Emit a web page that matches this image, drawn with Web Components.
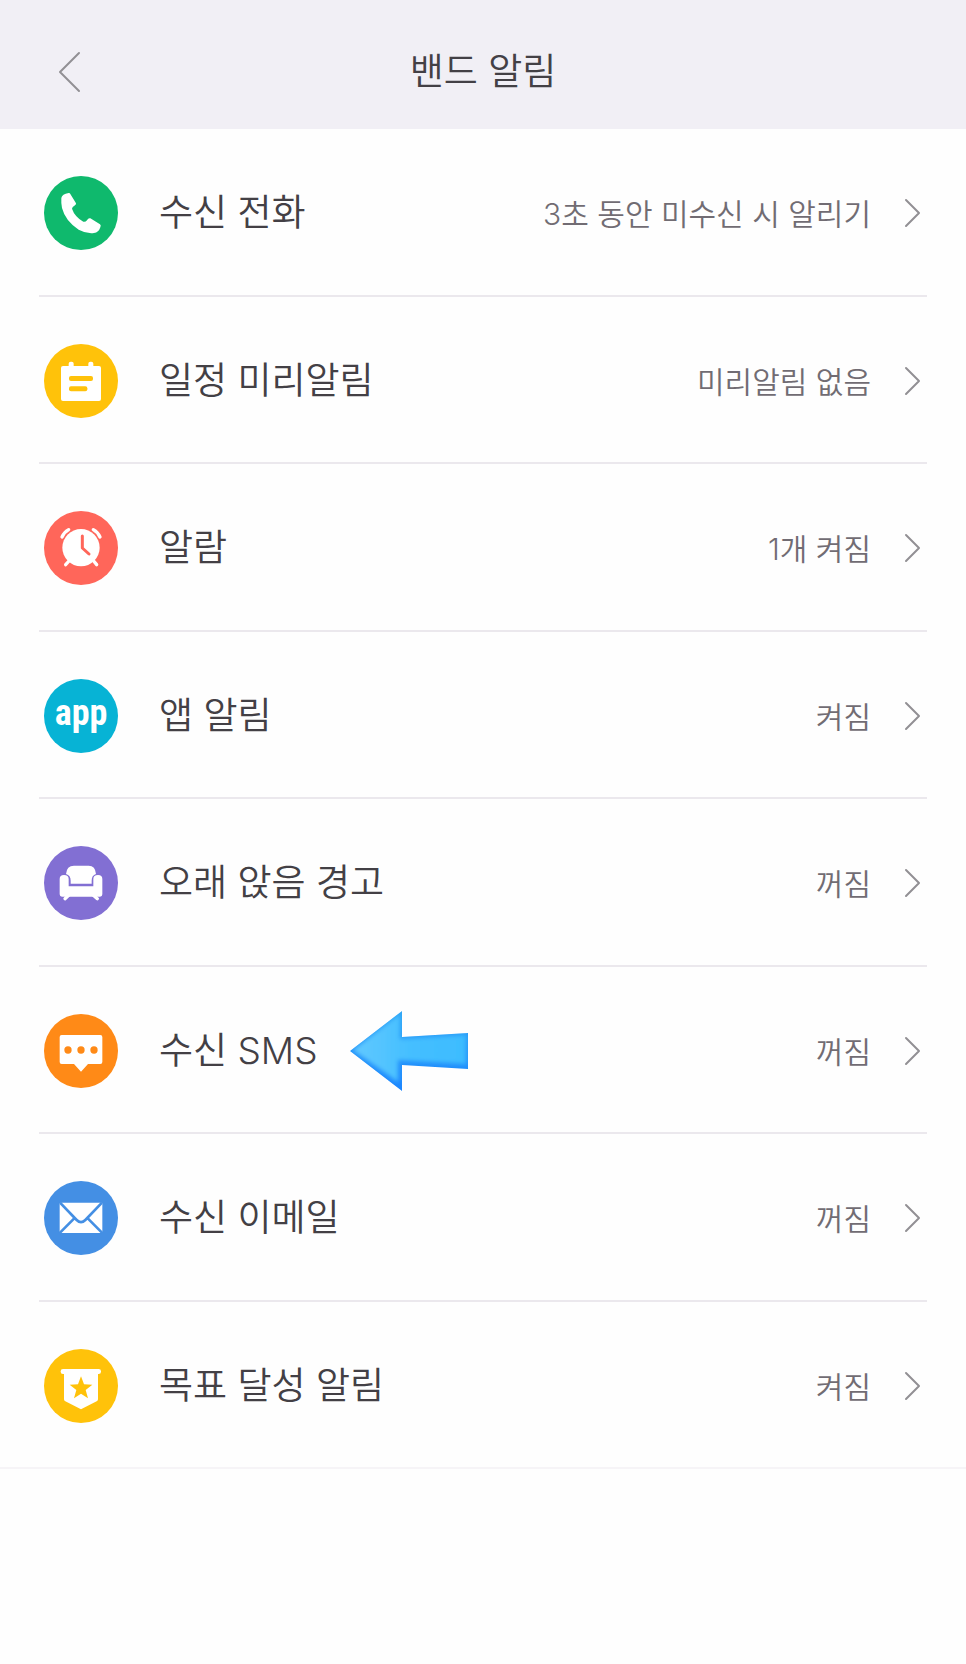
<!DOCTYPE html>
<html lang="ko">
<head>
<meta charset="UTF-8">
<meta name="viewport" content="width=device-width, initial-scale=1">
<title>밴드 알림</title>
<style>
    :root {
        --text-color: #434045;
        --value-color: #716c73;
        --arrow-color: #929094;
        --bar-bg: #f1eff5;
        --border-color: #ebe8ed;
    }
    body {
        margin: 0;
        background: #fefefe;
        color: var(--text-color);
        font-family: Inter, "Noto Sans CJK KR", sans-serif;
        font-weight: 350;
    }
</style>
</head>
<body>
<band-page>
    <band-header slot="header">밴드 알림</band-header>
    <band-item icon="phone" color="#0fb96d" value="3초 동안 미수신 시 알리기">수신 전화</band-item>
    <band-item icon="calendar" color="#ffc20a" value="미리알림 없음">일정 미리알림</band-item>
    <band-item icon="alarm" color="#ff665a" value="1개 켜짐">알람</band-item>
    <band-item icon="app" color="#07b3d5" value="켜짐">앱 알림</band-item>
    <band-item icon="sofa" color="#826fd3" value="꺼짐">오래 앉음 경고</band-item>
    <band-item icon="sms" color="#ff8a17" value="꺼짐">수신 SMS<pointer-arrow slot="mark"></pointer-arrow></band-item>
    <band-item icon="mail" color="#448fe4" value="꺼짐">수신 이메일</band-item>
    <band-item icon="goal" color="#ffc20a" value="켜짐">목표 달성 알림</band-item>
</band-page>

<script>
// Glyphs are drawn on a 222 x 222 disc; "currentColor" is the disc colour.
const ICONS = {
    phone: `<path d="M52 66Q54 54 74 51Q77 50 79 54L96 82Q97 85 93 88Q84 93 84 98Q92 122 118 137Q124 139 129 133Q133 125 139 127L168 145Q172 148 169 154Q164 170 150 171Q128 174 104 161Q64 135 54 96Q51 80 52 66Z"/>`,
    calendar: `
        <rect x="51" y="66" width="120" height="105" rx="6"/>
        <rect x="74" y="53" width="15" height="24" rx="6"/>
        <rect x="133" y="53" width="15" height="24" rx="6"/>
        <g fill="currentColor">
            <rect x="75" y="96" width="72" height="15" rx="6"/>
            <rect x="75" y="127" width="55" height="15" rx="6"/>
        </g>`,
    alarm: `
        <circle cx="111" cy="110" r="56"/>
        <g fill="none" stroke="#fff" stroke-width="10" stroke-linecap="round">
            <path d="M54 78Q60 64 74 56M148 56Q162 64 168 78"/>
            <path d="M75 150L65 161M149 150L158 161"/>
        </g>
        <path d="M115 75V111L135 129" fill="none" stroke="currentColor" stroke-width="9" stroke-linecap="round" stroke-linejoin="round"/>`,
    app: `<text x="111" y="139" text-anchor="middle">app</text>`,
    sofa: `
        <path d="M66 84Q68 59 90 59H134Q154 59 156 84Q143 88 143 104V113H80V104Q80 88 66 84Z"/>
        <path d="M47 99Q47 87 60 87Q74 87 74 99V121H148V99Q148 87 162 87Q175 87 175 99V145Q175 152 168 152H54Q47 152 47 145Z"/>
        <path d="M74 148L63 158M148 148L160 158" stroke="#fff" stroke-width="10" stroke-linecap="round"/>`,
    sms: `
        <path d="M53 63H169Q175 63 175 69V144Q175 150 169 150H132L111 173L90 150H53Q47 150 47 144V69Q47 63 53 63Z"/>
        <g fill="currentColor">
            <circle cx="72" cy="108" r="11"/>
            <circle cx="111" cy="108" r="11"/>
            <circle cx="150" cy="108" r="11"/>
        </g>`,
    mail: `
        <rect x="47" y="65" width="128" height="91" rx="2"/>
        <path d="M48 65L98 117Q111 130 124 117L174 65M46 157L90 113M176 157L132 113" fill="none" stroke="currentColor" stroke-width="8"/>`,
    goal: `
        <rect x="50" y="60" width="121" height="15" rx="7"/>
        <path d="M60 66H162V151Q162 155 158 157L111 181L64 157Q60 155 60 151Z"/>
        <path d="M111 82L120 106L145 107L125 123L132 148L111 134L90 148L97 123L77 107L102 106Z" fill="currentColor"/>`
};

class BandIcon extends HTMLElement {
    constructor() {
        super();
        this.attachShadow({ mode: 'open' });
    }

    connectedCallback() {
        this.shadowRoot.innerHTML = `
            <style>
                :host {
                    display: block;
                    width: 74px;
                    height: 74px;
                    flex: none;
                }
                svg {
                    display: block;
                    width: 100%;
                    height: 100%;
                }
                text {
                    font: 700 108px "Roboto Condensed", "Liberation Sans Narrow", "Open Sans Condensed", "Liberation Sans", sans-serif;
                }
            </style>
            <svg viewBox="0 0 222 222" fill="#fff">
                <circle cx="111" cy="111" r="111" fill="currentColor"/>
                ${ICONS[this.getAttribute('name')]}
            </svg>
        `;
    }
}

class PointerArrow extends HTMLElement {
    constructor() {
        super();
        this.attachShadow({ mode: 'open' }).innerHTML = `
            <style>
                :host {
                    display: block;
                    width: 118px;
                    height: 80px;
                    margin-left: 32px;
                    flex: none;
                }
                svg {
                    display: block;
                }
            </style>
            <svg width="118" height="80" viewBox="0 0 118 80">
                <defs>
                    <linearGradient id="edge" x1="0" y1="0" x2="0" y2="1">
                        <stop offset="0" stop-color="#2fa5f5"/>
                        <stop offset="1" stop-color="#1c86ff"/>
                    </linearGradient>
                    <linearGradient id="face" x1="0" y1="0" x2="1" y2="0">
                        <stop offset="0" stop-color="#62c9ff"/>
                        <stop offset="0.5" stop-color="#45bfff"/>
                        <stop offset="1" stop-color="#3dbcff"/>
                    </linearGradient>
                    <filter id="soft"><feGaussianBlur stdDeviation="2"/></filter>
                    <clipPath id="shape"><path d="M0 40L52 0V26L118 22V58L52 54V80Z"/></clipPath>
                </defs>
                <g clip-path="url(#shape)">
                    <rect width="118" height="80" fill="url(#edge)"/>
                    <path d="M3 39L50 3V28L116 24V53L48 49V71Z" fill="url(#face)" filter="url(#soft)"/>
                </g>
            </svg>
        `;
    }
}

class BandHeader extends HTMLElement {
    constructor() {
        super();
        this.attachShadow({ mode: 'open' }).innerHTML = `
            <style>
                :host {
                    display: grid;
                    grid-template-columns: 1fr auto 1fr;
                    align-items: center;
                    min-height: 129px;
                    padding: 14px 40px 0;
                    box-sizing: border-box;
                    background: var(--bar-bg);
                }
                button {
                    justify-self: start;
                    padding: 8px 16px;
                    border: none;
                    background: none;
                    cursor: pointer;
                }
                svg {
                    display: block;
                }
                h1 {
                    margin: 0;
                    font-size: 37px;
                    font-weight: inherit;
                    line-height: 48px;
                }
            </style>
            <button type="button" aria-label="뒤로">
                <svg width="26" height="42" viewBox="0 0 26 42" fill="none" stroke="var(--arrow-color)" stroke-width="2" stroke-linecap="round" stroke-linejoin="round">
                    <path d="M23 2L4 21L23 40"/>
                </svg>
            </button>
            <h1><slot></slot></h1>
        `;
    }
}

class BandItem extends HTMLElement {
    constructor() {
        super();
        this.attachShadow({ mode: 'open' });
    }

    connectedCallback() {
        const icon = this.getAttribute('icon');
        this.shadowRoot.innerHTML = `
            <style>
                :host {
                    display: block;
                    margin: 0 39px;
                    border-bottom: 2px solid var(--border-color);
                }
                :host(:last-of-type) {
                    margin: 0;
                    padding: 0 39px;
                    border-color: #f6f4f7;
                }
                a {
                    display: flex;
                    align-items: center;
                    height: 100%;
                    padding: 2px 4px 0 5px;
                    box-sizing: border-box;
                    color: inherit;
                    text-decoration: none;
                }
                .label {
                    margin-left: 41px;
                    font-size: 37px;
                    line-height: 48px;
                    white-space: nowrap;
                }
                .value {
                    margin-left: auto;
                    padding-top: 2px;
                    color: var(--value-color);
                    font-size: 30px;
                    line-height: 40px;
                    white-space: nowrap;
                }
                .chevron {
                    margin-left: 32px;
                    flex: none;
                }
            </style>
            <a href="#${icon}">
                <band-icon name="${icon}" style="color: ${this.getAttribute('color')}"></band-icon>
                <span class="label"><slot></slot></span>
                <slot name="mark"></slot>
                <span class="value">${this.getAttribute('value')}</span>
                <svg class="chevron" width="20" height="32" viewBox="0 0 20 32" fill="none" stroke="var(--arrow-color)" stroke-width="2" stroke-linecap="round" stroke-linejoin="round">
                    <path d="M3 3L16 16L3 29"/>
                </svg>
            </a>
        `;
    }
}

class BandPage extends HTMLElement {
    constructor() {
        super();
        this.attachShadow({ mode: 'open' }).innerHTML = `
            <style>
                :host {
                    display: block;
                    min-height: 100vh;
                }
                main {
                    display: grid;
                    grid-auto-rows: minmax(168px, auto) minmax(167px, auto);
                }
            </style>
            <slot name="header"></slot>
            <main><slot></slot></main>
        `;
    }
}

customElements.define('band-icon', BandIcon);
customElements.define('pointer-arrow', PointerArrow);
customElements.define('band-header', BandHeader);
customElements.define('band-item', BandItem);
customElements.define('band-page', BandPage);
</script>
</body>
</html>
